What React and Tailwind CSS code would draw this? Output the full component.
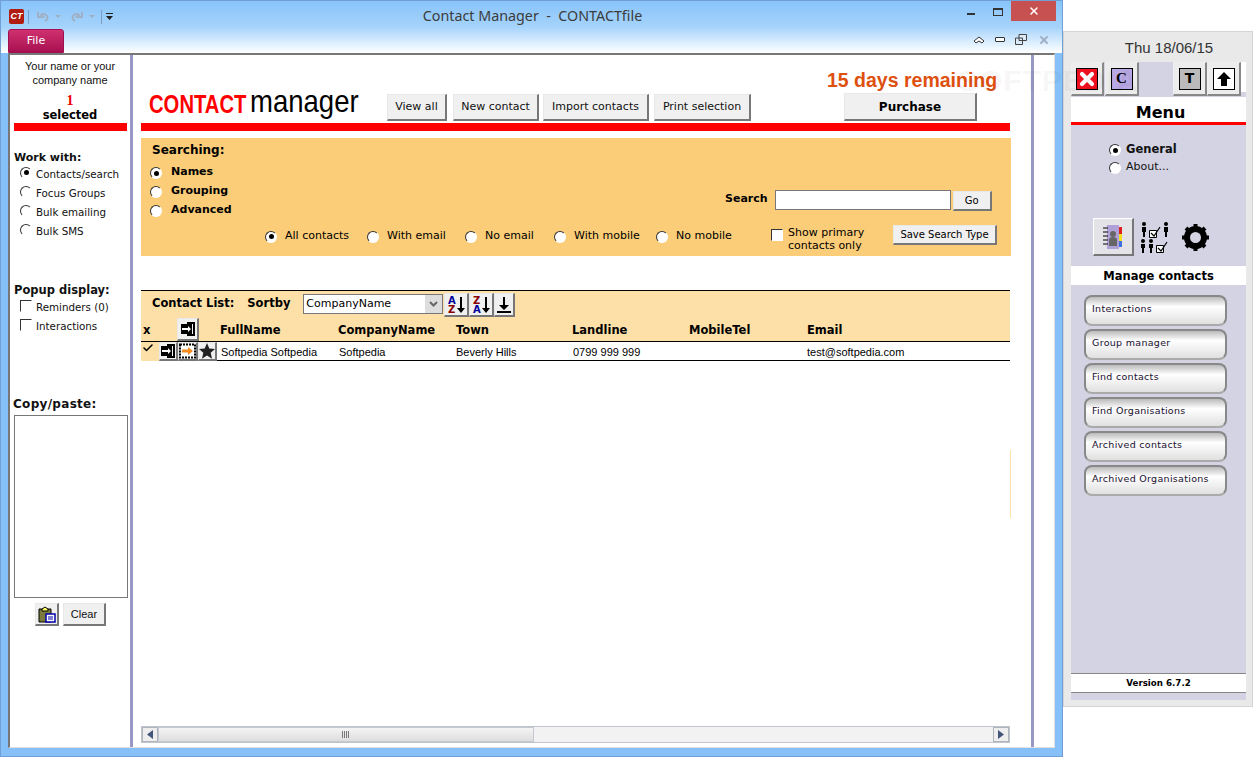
import { Check, X } from 'lucide-react';

const verdana = 'font-["DejaVu_Sans",sans-serif]';
const arial = 'font-["Liberation_Sans",Arial,sans-serif]';
const raised = 'bg-[#f0f0f0] border-t border-l border-t-[#e8e8e8] border-l-[#e8e8e8] border-r-2 border-b-2 border-r-[#777] border-b-[#777]';

function Radio({ on, className = '' }) {
  return (
    <span className={`flex h-[12px] w-[12px] shrink-0 items-center justify-center rounded-full border border-t-[#333] border-l-[#333] border-r-white border-b-white bg-white ${className}`}>
      {on && <span className="h-[5px] w-[5px] rounded-full bg-black" />}
    </span>
  );
}

function Box({ className = '' }) {
  return <span className={`block h-[12px] w-[12px] shrink-0 border border-t-[#333] border-l-[#333] border-r-white border-b-white bg-white ${className}`} />;
}

function Raised({ className = '', children }) {
  return <div className={`flex shrink-0 items-center justify-center ${raised} ${className}`}>{children}</div>;
}

function EnterIcon() {
  return (
    <svg width="16" height="16" viewBox="0 0 16 16">
      <path d="M1 3h11v10H1z" fill="#000" />
      <path d="M7 1h8v14H7v-2h6V3H7z" fill="#000" />
      <path d="M2 7h6V5l3 3-3 3V9H2z" fill="#fff" />
    </svg>
  );
}

function OpenIcon() {
  return (
    <svg width="17" height="16" viewBox="0 0 17 16">
      <path d="M1 1.5h15v13H1z" fill="#fff" stroke="#000" strokeWidth="2" strokeDasharray="2 1" />
      <path d="M3 6.5h6V4l5 4-5 4V9.5H3z" fill="#f58a1f" />
    </svg>
  );
}

function SortIcon({ top, bottom, topColor, bottomColor }) {
  return (
    <div className="flex items-center gap-[1px]">
      <div className={`flex flex-col text-[10px] leading-[9px] font-bold ${verdana}`}>
        <span className={topColor}>{top}</span>
        <span className={bottomColor}>{bottom}</span>
      </div>
      <svg width="8" height="18" viewBox="0 0 8 18"><path d="M3 1h2v11h3l-4 5-4-5h3z" fill="#000" /></svg>
    </div>
  );
}

function TitleBar() {
  return (
    <div className="h-[53px] shrink-0 border-t border-l border-r border-[#6f9fd4] bg-linear-to-b from-[#88c4fa] via-[#a5d3fb] via-50% to-white text-[#444]">
      <div className="flex h-[28px]">
        <div className="flex flex-1 items-center pl-[8px] pt-[3px]">
          <div className={`flex h-[15px] w-[15px] items-center justify-center rounded-[2px] bg-[#b01c10] text-[9px] leading-none font-bold text-white italic ${arial}`}>CT</div>
          <div className="ml-[4px] h-[14px] w-px bg-[#7c9cc0]" />
          <svg className="ml-[8px]" width="13" height="12" viewBox="0 0 13 12"><path d="M1 1v5h5L4 4c2-1.5 5-1 6 1s0 4-2 5" fill="none" stroke="#9fb0c4" strokeWidth="2" /></svg>
          <svg className="ml-[5px]" width="6" height="3" viewBox="0 0 6 3"><path d="M0 0h6L3 3z" fill="#9fb0c4" /></svg>
          <svg className="ml-[9px]" width="13" height="12" viewBox="0 0 13 12"><path d="M12 1v5H7l2-2C7 2.5 4 3 3 5s0 4 2 5" fill="none" stroke="#9fb0c4" strokeWidth="2" /></svg>
          <svg className="ml-[6px]" width="6" height="3" viewBox="0 0 6 3"><path d="M0 0h6L3 3z" fill="#9fb0c4" /></svg>
          <div className="ml-[6px] h-[14px] w-px bg-[#7c9cc0]" />
          <svg className="ml-[4px]" width="7" height="7" viewBox="0 0 7 7"><path d="M0 0h7v1H0zM0 3h7L3.5 7z" fill="#222" /></svg>
        </div>
        <div className='pt-[5px] font-["Noto_Sans",sans-serif] text-[14.3px] leading-[20px] whitespace-pre text-[#3c3c3c]'>Contact Manager  -  CONTACTfile</div>
        <div className="flex flex-1 items-start justify-end pr-[6px]">
          <div className="mt-[12px] mr-[18px] h-[2px] w-[8px] bg-[#333]" />
          <div className="mt-[7px] mr-[8px] h-[8px] w-[10px] border border-t-2 border-[#333]" />
          <div className="flex h-[20px] w-[45px] items-center justify-center bg-[#c75050]"><X size={12} color="#fff" strokeWidth={3} /></div>
        </div>
      </div>
      <div className="flex h-[24px]">
        <div className={`ml-[7px] flex h-[24px] w-[56px] items-center justify-center rounded-t-[3px] border border-[#a01050] bg-linear-to-b from-[#d03070] to-[#a80f50] text-[11px] text-white ${verdana}`}>File</div>
        <div className="ml-auto flex items-center pr-[12px] pb-[3px]">
          <svg width="12" height="9" viewBox="0 0 12 9"><path d="M1 6l5-4 5 4-2 2-3-2-3 2z" fill="#fff" stroke="#333" /></svg>
          <div className="ml-[10px] h-[5px] w-[10px] rounded-[1px] border border-[#333] bg-white" />
          <svg className="ml-[10px]" width="12" height="11" viewBox="0 0 12 11"><path d="M4 .5h7.5v6H4zM.5 4h7v6.5h-7z" fill="#dbeaf8" stroke="#444" /></svg>
          <X className="ml-[11px]" size={12} color="#a0b0c4" strokeWidth={4} />
        </div>
      </div>
    </div>
  );
}

function Sidebar() {
  const workWith = ['Contacts/search', 'Focus Groups', 'Bulk emailing', 'Bulk SMS'];
  return (
    <aside className={`flex w-[120px] shrink-0 flex-col text-[10.3px] text-[#111] ${verdana}`}>
      <div className={`mt-[4px] text-center text-[11px] leading-[14px] ${arial}`}>
        <div>Your name or your</div>
        <div>company name</div>
      </div>
      <div className="mt-[7px] text-center text-[14px] leading-[14px] font-bold text-[#e00] font-['Liberation_Serif',serif]">1</div>
      <div className="text-center text-[11.5px] leading-[15px] font-bold text-black">selected</div>
      <div className="ml-[4px] h-[8px] w-[113px] bg-[#f00]" />
      <div className="mt-[20px] ml-[4px] text-[11px] leading-[14px] font-bold">Work with:</div>
      <div>
        {workWith.map((label, i) => (
          <div key={label} className="flex h-[19px] items-center pl-[10px]">
            <Radio on={i === 0} className="mb-[4px]" />
            <span className="ml-[4px]">{label}</span>
          </div>
        ))}
      </div>
      <div className="mt-[42px] ml-[4px] text-[11.5px] leading-[14px] font-bold">Popup display:</div>
      <div className="mt-[1px]">
        {['Reminders (0)', 'Interactions'].map((label) => (
          <div key={label} className="flex h-[19px] items-center pl-[10px]">
            <Box className="mb-[3px]" />
            <span className="ml-[4px]">{label}</span>
          </div>
        ))}
      </div>
      <div className="mt-[61px] ml-[3px] text-[12px] leading-[14px] font-bold tracking-[0.3px]">Copy/paste:</div>
      <div className="mt-[4px] ml-[4px] h-[183px] w-[114px] border border-[#777] bg-white" />
      <div className="mt-[5px] ml-[25px] flex gap-[4px]">
        <Raised className="h-[23px] w-[24px]">
          <svg width="18" height="17" viewBox="0 0 18 17">
            <path d="M1 3h12v13H1z" fill="#7c7a3c" stroke="#000" />
            <path d="M4 3l3-2 3 2v2H4z" fill="#ff6" stroke="#000" />
            <path d="M8 8h9v8H8z" fill="#fff" stroke="#00a" strokeWidth="1.5" />
            <path d="M10 11h5M10 13h5" stroke="#00a" />
          </svg>
        </Raised>
        <Raised className={`h-[23px] w-[43px] text-[11px] ${arial}`}>Clear</Raised>
      </div>
    </aside>
  );
}

function Header() {
  const buttons = [
    ['View all', 'w-[60px] mr-[6px]'],
    ['New contact', 'w-[86px] mr-[4px]'],
    ['Import contacts', 'w-[106px] mr-[5px]'],
    ['Print selection', 'w-[97px]'],
  ];
  return (
    <div className="flex h-[68px] items-end pb-[2px] pl-[8px]">
      <div className="mb-[3px] flex w-[238px] items-end text-black">
        <span className={`w-[101px] origin-left scale-x-[0.81] text-[25px] leading-[28px] font-bold whitespace-nowrap text-[#f00] ${arial}`}>CONTACT</span>
        <span className={`w-[108px] origin-left scale-x-[0.86] text-[32px] leading-[34px] whitespace-nowrap text-[#000] ${arial}`}>manager</span>
      </div>
      {buttons.map(([label, width]) => (
        <Raised key={label} className={`h-[27px] text-[11px] text-[#111] ${verdana} ${width}`}>{label}</Raised>
      ))}
      <div className="ml-[76px] flex w-[170px] flex-col">
        <div className={`mb-[1px] text-[19.5px] leading-[24px] font-bold whitespace-nowrap text-[#de500f] ${arial}`}>15 days remaining</div>
        <Raised className={`ml-[17px] h-[28px] w-[133px] text-[12px] font-bold text-black ${verdana}`}>Purchase</Raised>
      </div>
    </div>
  );
}

function SearchPanel() {
  const kinds = [
    ['Names', true],
    ['Grouping', false],
    ['Advanced', false],
  ];
  const filters = [
    ['All contacts', 'w-[102px]'],
    ['With email', 'w-[98px]'],
    ['No email', 'w-[89px]'],
    ['With mobile', 'w-[102px]'],
    ['No mobile', 'w-[109px]'],
  ];
  return (
    <div className={`mt-[7px] h-[118px] w-[870px] bg-[#fbcd78] text-black ${verdana}`}>
      <div className="flex h-[78px]">
        <div className="w-[584px] pt-[5px] pl-[9px]">
          <div className="ml-[2px] text-[12px] leading-[15px] font-bold">Searching:</div>
          <div className="mt-[5px]">
            {kinds.map(([label, on]) => (
              <div key={label} className="flex h-[19px] items-center">
                <Radio on={on} className="mt-[1px]" />
                <span className="ml-[3px] pl-[6px] text-[11px] font-bold">{label}</span>
              </div>
            ))}
          </div>
        </div>
        <div className="flex items-start pt-[53px]">
          <span className="text-[11px] leading-[16px] font-bold">Search</span>
          <div className="mt-[-1px] ml-[7px] h-[20px] w-[176px] border border-[#777] bg-white" />
          <Raised className="ml-[2px] h-[20px] w-[39px] text-[10px]">Go</Raised>
        </div>
      </div>
      <div className="flex items-start pl-[124px]">
        <div className="flex pt-[13px]">
          {filters.map(([label, width], i) => (
            <div key={label} className={`flex items-center text-[11px] leading-[14px] ${width}`}>
              <Radio on={i === 0} className="mt-[1px]" />
              <span className="ml-[2px] pl-[6px]">{label}</span>
            </div>
          ))}
        </div>
        <div className="flex w-[128px] pt-[10px]">
          <Box className="mt-[3px] ml-[6px]" />
          <div className="ml-[5px] text-[11px] leading-[13px]">Show primary<br />contacts only</div>
        </div>
        <Raised className="mt-[9px] h-[20px] w-[104px] text-[10px] whitespace-nowrap">Save Search Type</Raised>
      </div>
    </div>
  );
}

function ContactList() {
  return (
    <div className={`mt-[34px] w-[869px] border-t border-black text-black ${verdana}`}>
      <div className="bg-[#fddfa8]">
        <div className="flex h-[27px] items-start">
          <span className="mt-[5px] ml-[11px] text-[11.5px] leading-[15px] font-bold">Contact List:</span>
          <span className="mt-[5px] ml-[13px] w-[56px] text-[11.5px] leading-[15px] font-bold">Sortby</span>
          <div className="mt-[3px] flex h-[20px] w-[140px] items-center justify-between border border-[#777] bg-white pl-[2px] text-[11px]">
            <span>CompanyName</span>
            <span className="flex h-[18px] w-[17px] items-center justify-center bg-[#ddd]">
              <svg width="9" height="6" viewBox="0 0 9 6"><path d="M1 1l3.5 3.5L8 1" fill="none" stroke="#666" strokeWidth="2" /></svg>
            </span>
          </div>
          <Raised className="mt-[2px] ml-[1px] h-[24px] w-[25px]"><SortIcon top="A" bottom="Z" topColor="text-[#009]" bottomColor="text-[#800]" /></Raised>
          <Raised className="mt-[2px] h-[24px] w-[25px]"><SortIcon top="Z" bottom="A" topColor="text-[#800]" bottomColor="text-[#009]" /></Raised>
          <Raised className="mt-[2px] h-[24px] w-[21px]">
            <svg width="14" height="16" viewBox="0 0 14 16"><path d="M6 0h2v8h4l-5 5-5-5h4zM0 14h14v2H0z" fill="#000" /></svg>
          </Raised>
        </div>
        <div className="flex h-[23px] text-[11.5px] leading-[24px] font-bold">
          <span className="w-[36px] pl-[2px]">x</span>
          <Raised className="h-[23px] w-[22px]"><EnterIcon /></Raised>
          <span className="ml-[21px] w-[118px]">FullName</span>
          <span className="w-[118px]">CompanyName</span>
          <span className="w-[116px]">Town</span>
          <span className="w-[117px]">Landline</span>
          <span className="w-[118px]">MobileTel</span>
          <span>Email</span>
        </div>
      </div>
      <div className={`flex h-[20px] border-t border-black text-[11px] leading-[20px] ${arial}`}>
        <div className="w-[18px] bg-[#fddfa8] pl-[1px]"><Check size={12} color="#000" strokeWidth={3} /></div>
        <div className="flex flex-1 border-b border-black">
          <Raised className="h-[19px] w-[19px]"><EnterIcon /></Raised>
          <Raised className="h-[19px] w-[20px]"><OpenIcon /></Raised>
          <Raised className="h-[19px] w-[19px] bg-[#ddd]">
            <svg width="16" height="16" viewBox="0 0 16 16"><path d="M8 0l2.3 5.5 5.7.5-4.3 3.8 1.3 6L8 12.6l-5 3.2 1.3-6L0 6l5.7-.5z" fill="#222" /></svg>
          </Raised>
          <span className="w-[118px] pl-[4px]">Softpedia Softpedia</span>
          <span className="w-[117px] pl-[4px]">Softpedia</span>
          <span className="w-[117px] pl-[4px]">Beverly Hills</span>
          <span className="w-[234px] pl-[4px]">0799 999 999</span>
          <span className="pl-[4px]">test@softpedia.com</span>
        </div>
      </div>
    </div>
  );
}

function ScrollBar() {
  return (
    <div className="mb-[4px] flex h-[17px] w-[869px] items-center border border-[#c0c4cc] bg-[#f2f2f2]">
      <div className="flex h-[15px] w-[16px] items-center justify-center border border-[#b0b4bc] bg-[#eee]">
        <svg width="6" height="9" viewBox="0 0 6 9"><path d="M6 0v9L0 4.5z" fill="#44557a" /></svg>
      </div>
      <div className="flex h-[15px] w-[376px] items-center justify-center border border-[#c4c8d0] bg-linear-to-b from-[#f4f4f4] to-[#dedede]">
        <svg width="8" height="7" viewBox="0 0 8 7"><path d="M.5 0v7M2.5 0v7M4.5 0v7M6.5 0v7" stroke="#777" /></svg>
      </div>
      <div className="flex-1" />
      <div className="flex h-[15px] w-[16px] items-center justify-center border border-[#b0b4bc] bg-[#eee]">
        <svg width="6" height="9" viewBox="0 0 6 9"><path d="M0 0v9l6-4.5z" fill="#44557a" /></svg>
      </div>
    </div>
  );
}

function ContactPane() {
  return (
    <main className="relative flex w-[904px] shrink-0 flex-col border-x-[3px] border-x-[#9898c6] pl-[8px]">
      <Header />
      <div className="h-[8px] w-[869px] bg-[#f00]" />
      <SearchPanel />
      <ContactList />
      <div className="flex-1" />
      <ScrollBar />
      <div className="absolute top-[395px] left-[877px] h-[68px] w-px bg-[#fddfa8]" />
    </main>
  );
}

function SquareButton({ children, className = '' }) {
  return (
    <div className={`flex h-[34px] items-center justify-center border-r-2 border-b-2 border-r-[#888] border-b-[#888] border-t border-l border-t-[#eee] border-l-[#eee] bg-[#ececec] ${className}`}>
      {children}
    </div>
  );
}

function MenuPanel() {
  const actions = ['Interactions', 'Group manager', 'Find contacts', 'Find Organisations', 'Archived contacts', 'Archived Organisations'];
  return (
    <section className={`mt-[31px] flex h-[676px] w-[190px] flex-col border border-[#d4d4d4] bg-[#e9e9e9] text-black ${verdana}`}>
      <div className={`h-[30px] pt-[7px] pl-[22px] text-center text-[15px] leading-[18px] text-[#333] ${arial}`}>Thu 18/06/15</div>
      <div className="mx-[7px] flex h-[638px] w-[175px] flex-col bg-[#d3d3e3]">
        <div className="flex h-[35px]">
          <SquareButton className="w-[33px]">
            <div className="flex h-[22px] w-[22px] items-center justify-center border border-black bg-[#f01020]"><X size={20} color="#fff" strokeWidth={5} /></div>
          </SquareButton>
          <SquareButton className="ml-[1px] w-[34px]">
            <div className="flex h-[22px] w-[22px] items-center justify-center border border-black bg-[#b8a8e4] font-['Liberation_Serif',serif] text-[15px] font-bold">C</div>
          </SquareButton>
          <SquareButton className="ml-[34px] w-[34px]">
            <div className="flex h-[22px] w-[22px] items-center justify-center border border-black bg-[#bbb] text-[14px] font-bold">T</div>
          </SquareButton>
          <SquareButton className="w-[34px]">
            <div className="flex h-[22px] w-[22px] items-center justify-center border border-black bg-white">
              <svg width="14" height="14" viewBox="0 0 14 14"><path d="M7 0l7 7h-4v7H4V7H0z" fill="#000" /></svg>
            </div>
          </SquareButton>
          <div className="h-[30px] flex-1 bg-white" />
        </div>
        <div className="flex h-[28px] flex-col bg-white">
          <div className="flex-1 pt-[6px] pl-[4px] text-center text-[16px] leading-[19px] font-bold">Menu</div>
          <div className="h-[3px] bg-[#f00]" />
        </div>
        <div className="mt-[16px] pl-[38px]">
          <div className="flex h-[18px] items-center text-[11.5px] font-bold text-[#111]">
            <Radio on />
            <span className="ml-[5px]">General</span>
          </div>
          <div className="flex h-[17px] items-center text-[11px] text-[#111]">
            <Radio />
            <span className="ml-[5px]">About...</span>
          </div>
        </div>
        <div className="mt-[42px] flex h-[38px] items-center pl-[22px]">
          <div className="flex h-[38px] w-[41px] items-center justify-center border-r-2 border-b-2 border-r-[#777] border-b-[#777] border-t border-l border-t-white border-l-white bg-[#e4e4e8]">
            <svg width="24" height="28" viewBox="0 0 24 28">
              <path d="M6 2h12v24H6z" fill="#b0a0d8" />
              <path d="M18 4h3v7h-3z" fill="#e02020" />
              <path d="M18 11h3v7h-3z" fill="#f6e020" />
              <path d="M18 18h3v6h-3z" fill="#4070e0" />
              <circle cx="12" cy="11" r="3" fill="#666" />
              <path d="M8 23v-6q0-3 4-3t4 3v6z" fill="#666" />
              <path d="M2 5h5M2 9h5M2 13h5M2 17h5M2 21h5" stroke="#000" />
            </svg>
          </div>
          <svg className="ml-[5px]" width="32" height="32" viewBox="0 0 32 32">
            <g fill="#000">
              <circle cx="5" cy="3" r="2" /><path d="M3 6h4v5H6v5H4v-5H3z" />
              <circle cx="27" cy="3" r="2" /><path d="M25 6h4v5h-1v5h-2v-5h-1z" />
              <circle cx="4" cy="20" r="2" /><path d="M2 23h4v4H5v5H3v-5H2z" />
              <circle cx="12" cy="20" r="2" /><path d="M10 23h4v4h-1v5h-2v-5h-1z" />
            </g>
            <path d="M10.5 9.500h7v7h-7zM17.5 24.500h7v7h-7z" fill="#fff" stroke="#000" />
            <path d="M12 12l3 3 6-9M19 27l3 3 6-9" fill="none" stroke="#000" strokeWidth="1.2" />
          </svg>
          <svg className="ml-[10px]" width="29" height="29" viewBox="0 0 29 29">
            <circle cx="14.5" cy="14.5" r="8.5" fill="none" stroke="#000" strokeWidth="6" />
            <path d="M14.5 1v27M1 14.5h27M5 5l19 19M24 5L5 24" stroke="#000" strokeWidth="4" strokeDasharray="5 17" />
          </svg>
        </div>
        <div className="mt-[10px] h-[19px] bg-white text-center text-[11.5px] leading-[20px] font-bold">Manage contacts</div>
        <div className="mt-[10px] flex flex-col gap-[3px] pl-[13px]">
          {actions.map((label) => (
            <div key={label} className="h-[31px] w-[143px] rounded-[8px] border-2 border-[#888] border-b-[#aaa] bg-linear-to-b from-[#bbb] via-white via-35% to-[#e0e0e0] pl-[6px] text-[9.5px] leading-[24px] tracking-[0.3px] text-[#201030]">
              {label}
            </div>
          ))}
        </div>
        <div className="flex-1" />
        <div className="mb-[7px] h-[20px] border-y border-[#888] bg-white text-center text-[8.7px] leading-[19px] font-bold">Version 6.7.2</div>
      </div>
    </section>
  );
}

export default function App() {
  return (
    <div className="relative flex h-[757px] w-[1253px] overflow-hidden bg-white">
      <div className="flex h-[757px] w-[1063px] shrink-0 flex-col">
        <TitleBar />
        <div className="flex h-[704px] border-x border-b border-[#6f9fd4] bg-[#85c1f8] px-[7px] pb-[8px]">
          <div className="flex w-[1047px] border-t-2 border-l-2 border-[#777] border-r border-r-[#e0e0e0] border-b border-b-[#e0e0e0] bg-white">
            <Sidebar />
            <ContactPane />
          </div>
        </div>
      </div>
      <MenuPanel />
      <div className={`pointer-events-none absolute top-[64px] left-[958px] text-[30px] leading-[34px] font-bold tracking-[1px] text-[#000]/5 ${arial}`}>SOFTPEDIA</div>
    </div>
  );
}
